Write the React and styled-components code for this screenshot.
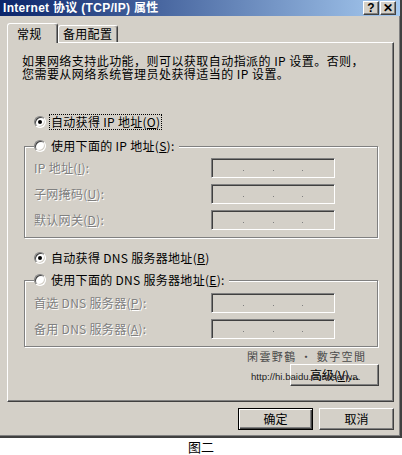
import React from "react";
import styled, { createGlobalStyle } from "styled-components";

const Global = createGlobalStyle`
  html, body { margin: 0; padding: 0; background: #fff; }
  body { font-family: "Noto Sans CJK SC", "Liberation Sans", sans-serif; font-size: 12px; color: #000; }
  * { box-sizing: border-box; }
`;

const Window = styled.div`
  width: 402px;
  background: #d4d0c8;
  border-right: 2px solid #404040;
  border-bottom: 2px solid #404040;
  box-shadow: inset -1px -1px 0 #808080;
  display: flex;
  flex-direction: column;
`;

const TitleBar = styled.div`
  height: 16px;
  background: linear-gradient(to right, #0a246a, #a6caf0);
  display: flex;
  align-items: center;
  padding: 0 4px 0 3px;
`;

const Title = styled.div`
  flex: 1;
  color: #fff;
  font-family: "Liberation Sans", "Noto Sans CJK SC", sans-serif;
  font-weight: bold;
  font-size: 12px;
  letter-spacing: 0.3px;
  line-height: 16px;
  white-space: nowrap;
`;

const TitleButton = styled.div`
  width: 16px;
  height: 14px;
  margin-left: ${(p) => (p.$gap ? "1px" : "0")};
  background: #d4d0c8;
  border: 1px solid;
  border-color: #fff #404040 #404040 #fff;
  box-shadow: inset -1px -1px 0 #808080;
  display: flex;
  align-items: center;
  justify-content: center;
  font-family: "Liberation Sans", sans-serif;
  font-weight: bold;
  font-size: ${(p) => p.$size || "11px"};
  line-height: 1;
  color: #000;
`;

const Body = styled.div`
  padding: 7px 6px 6px 7px;
  display: flex;
  flex-direction: column;
`;

const TabRow = styled.div`
  display: flex;
  align-items: flex-end;
`;

const Tab = styled.div`
  height: ${(p) => (p.$active ? "20px" : "17px")};
  width: ${(p) => p.$w}px;
  margin-bottom: ${(p) => (p.$active ? "-1px" : "0")};
  z-index: ${(p) => (p.$active ? 2 : 1)};
  background: #d4d0c8;
  border: 1px solid;
  border-bottom: none;
  border-color: #fff #404040 transparent #fff;
  border-radius: 3px 3px 0 0;
  box-shadow: inset -1px 0 0 #808080;
  padding-left: ${(p) => p.$pl}px;
  display: flex;
  align-items: center;
  line-height: 1;
  font-size: 12px;
  letter-spacing: 0.3px;
`;

const Panel = styled.div`
  position: relative;
  height: 360px;
  border: 1px solid;
  border-color: #fff #404040 #404040 #fff;
  box-shadow: inset -1px -1px 0 #808080;
  display: flex;
  flex-direction: column;
`;

const Description = styled.div`
  margin: 11px 0 0 14px;
  line-height: 13px;
  letter-spacing: 0.45px;
  white-space: nowrap;
`;

const Section = styled.div`
  margin-left: 16px;
  width: 355px;
  display: flex;
  flex-direction: column;
`;

const RadioRow = styled.div`
  height: 16px;
  display: flex;
  align-items: center;
  gap: 3px;
  padding-left: ${(p) => p.$pl || 0}px;
  margin-top: ${(p) => p.$mt || 0}px;
  white-space: nowrap;
  line-height: 1;
  letter-spacing: 0.3px;
`;

const RadioCircle = styled.span`
  width: 12px;
  height: 12px;
  border-radius: 50%;
  border: 1px solid;
  border-color: #808080 #fff #fff #808080;
  box-shadow: inset 1px 1px 0 #404040, inset -1px -1px 0 #d4d0c8;
  background: #fff;
  display: inline-flex;
  align-items: center;
  justify-content: center;
  flex: none;
`;

const RadioDot = styled.span`
  width: 4px;
  height: 4px;
  border-radius: 50%;
  background: #000;
`;

const RadioLabel = styled.span`
  padding: 1px 1px;
  border: 1px dotted ${(p) => (p.$focus ? "#000" : "transparent")};
  line-height: 12px;
`;

const Group = styled.fieldset`
  margin: ${(p) => p.$mt}px 0 0 0;
  width: 354px;
  padding: ${(p) => p.$pt}px 9px 7px 9px;
  border: 1px solid #808080;
  box-shadow: 1px 1px 0 #fff, inset 1px 1px 0 #fff;
  min-width: 0;
`;

const Legend = styled.legend`
  padding: 0 2px 0 0;
  background: #d4d0c8;
`;

const FieldGrid = styled.div`
  display: grid;
  grid-template-columns: 177px 124px;
  row-gap: 6px;
  align-items: center;
`;

const FieldLabel = styled.span`
  color: #808080;
  text-shadow: 1px 1px 0 #fff;
  white-space: nowrap;
  line-height: 1;
  letter-spacing: 0.3px;
`;

const IpField = styled.div`
  width: 124px;
  height: 20px;
  border: 1px solid;
  border-color: #808080 #fff #fff #808080;
  box-shadow: inset 1px 1px 0 #404040, inset -1px -1px 0 #d4d0c8;
  background: #d4d0c8;
  display: flex;
  align-items: center;
  padding: 2px 3px 0 3px;
`;

const Octet = styled.span`
  flex: 1;
`;

const Dot = styled.span`
  width: 1px;
  height: 1px;
  background: #808080;
  margin-top: 3px;
`;

const ButtonRow = styled.div`
  display: flex;
  justify-content: flex-end;
  gap: 6px;
  margin-top: ${(p) => p.$mt || 0}px;
`;

const Button = styled.div`
  width: ${(p) => p.$w}px;
  height: ${(p) => p.$h || 22}px;
  background: #d4d0c8;
  border: 1px solid;
  border-color: ${(p) => (p.$default ? "#000" : "#fff #404040 #404040 #fff")};
  box-shadow: ${(p) =>
    p.$default
      ? "inset 1px 1px 0 #fff, inset -1px -1px 0 #404040, inset -2px -2px 0 #808080"
      : "inset -1px -1px 0 #808080"};
  display: flex;
  align-items: center;
  justify-content: center;
  font-size: 12px;
  line-height: 1;
  white-space: nowrap;
`;

const Watermark = styled.div`
  position: absolute;
  left: 239px;
  top: 307px;
  display: flex;
  flex-direction: column;
  align-items: flex-start;
  pointer-events: none;
`;

const WmTitle = styled.span`
  font-family: "Noto Sans CJK TC", "Noto Sans CJK SC", sans-serif;
  font-size: 11px;
  letter-spacing: 1.4px;
  color: #4a4a4a;
  line-height: 12px;
  white-space: nowrap;
`;

const WmUrl = styled.span`
  margin: 10px 0 0 4px;
  font-family: "Liberation Sans", sans-serif;
  font-size: 9.6px;
  color: #222;
  line-height: 10px;
  white-space: nowrap;
`;

const Caption = styled.div`
  margin-top: 2px;
  width: 402px;
  text-align: center;
  font-size: 13px;
  line-height: 14px;
  color: #000;
`;

const Radio = ({ checked, focus, children, pl, mt }) => (
  <RadioRow $pl={pl} $mt={mt}>
    <RadioCircle>{checked && <RadioDot />}</RadioCircle>
    <RadioLabel $focus={focus}>{children}</RadioLabel>
  </RadioRow>
);

const Field = () => (
  <IpField>
    <Octet />
    <Dot />
    <Octet />
    <Dot />
    <Octet />
    <Dot />
    <Octet />
  </IpField>
);

export default function App() {
  return (
    <>
      <Global />
      <Window>
        <TitleBar>
          <Title>Internet 协议 (TCP/IP) 属性</Title>
          <TitleButton $size="12px">?</TitleButton>
          <TitleButton $gap $size="12px">✕</TitleButton>
        </TitleBar>
        <Body>
          <TabRow>
            <Tab $active $w={51} $pl={9}>常规</Tab>
            <Tab $w={60} $pl={4}>备用配置</Tab>
          </TabRow>
          <Panel>
            <Description>
              如果网络支持此功能，则可以获取自动指派的 IP 设置。否则，
              <br />
              您需要从网络系统管理员处获得适当的 IP 设置。
            </Description>
            <Section>
              <Radio checked focus pl={10} mt={34}>
                自动获得 IP 地址(<u>O</u>)
              </Radio>
              <Group $mt={8} $pt={4}>
                <Legend>
                  <Radio>使用下面的 IP 地址(<u>S</u>):</Radio>
                </Legend>
                <FieldGrid>
                  <FieldLabel>IP 地址(<u>I</u>):</FieldLabel>
                  <Field />
                  <FieldLabel>子网掩码(<u>U</u>):</FieldLabel>
                  <Field />
                  <FieldLabel>默认网关(<u>D</u>):</FieldLabel>
                  <Field />
                </FieldGrid>
              </Group>
              <Radio checked pl={10} mt={12}>
                自动获得 DNS 服务器地址(<u>B</u>)
              </Radio>
              <Group $mt={6} $pt={5}>
                <Legend>
                  <Radio>使用下面的 DNS 服务器地址(<u>E</u>):</Radio>
                </Legend>
                <FieldGrid>
                  <FieldLabel>首选 DNS 服务器(<u>P</u>):</FieldLabel>
                  <Field />
                  <FieldLabel>备用 DNS 服务器(<u>A</u>):</FieldLabel>
                  <Field />
                </FieldGrid>
              </Group>
              <ButtonRow $mt={17}>
                <Button $w={89}>高级(<u>V</u>)...</Button>
              </ButtonRow>
            </Section>
            <Watermark>
              <WmTitle>閑雲野鶴 · 數字空間</WmTitle>
              <WmUrl>http://hi.baidu.com/senya.</WmUrl>
            </Watermark>
          </Panel>
          <ButtonRow $mt={6}>
            <Button $default $w={75}>确定</Button>
            <Button $w={75}>取消</Button>
          </ButtonRow>
        </Body>
      </Window>
      <Caption>图二</Caption>
    </>
  );
}
